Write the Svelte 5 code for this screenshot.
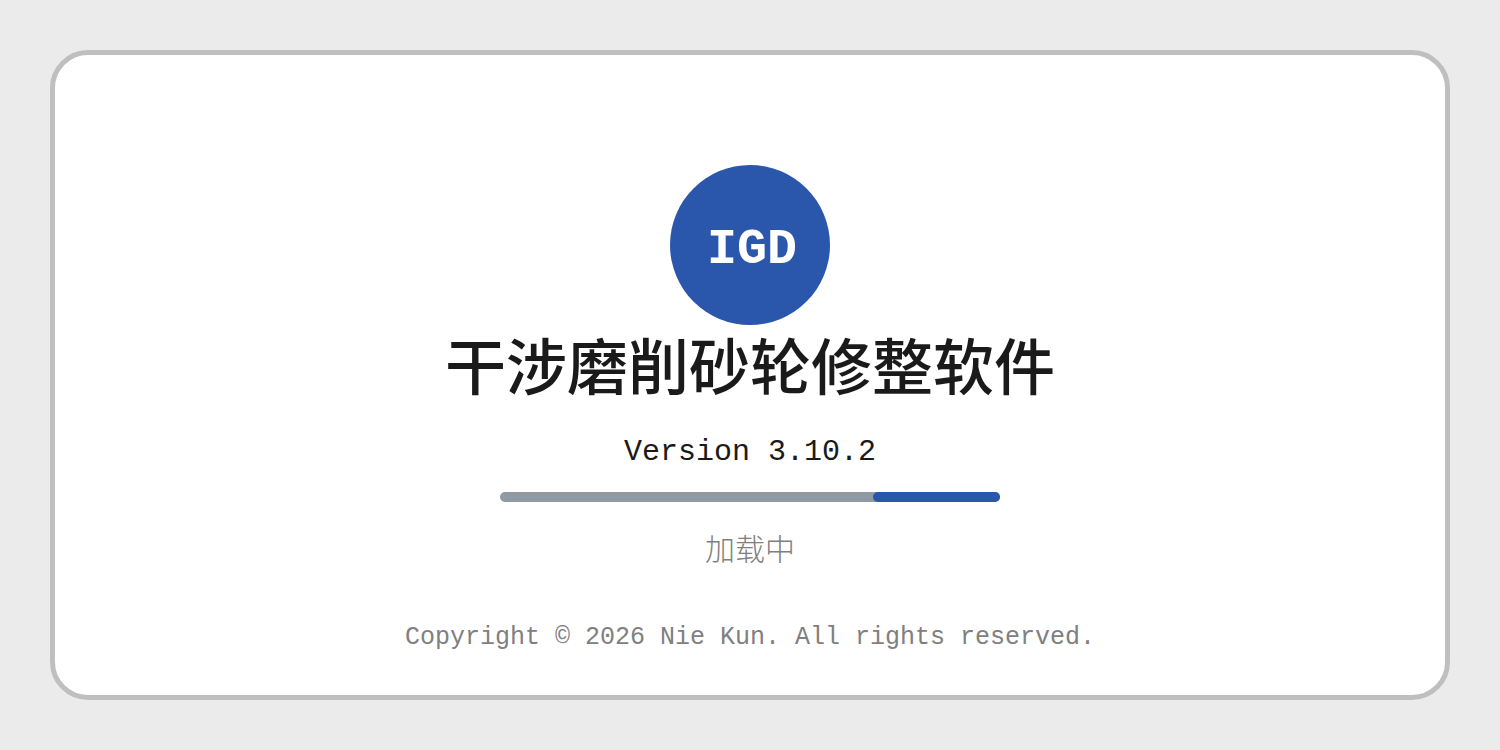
<script>
    let version = '3.10.2';
    let status = '加载中';
    // indeterminate bar: where the chunk starts and how long it is, in percent
    let chunk = { start: 74.6, size: 25.4 };
</script>

<main>
    <section class="splash">
        <div class="logo">IGD</div>
        <h1>干涉磨削砂轮修整软件</h1>
        <p class="version">Version {version}</p>
        <div class="bar" role="progressbar" aria-label={status}>
            <div class="chunk" style="margin-left: {chunk.start}%; width: {chunk.size}%"></div>
        </div>
        <p class="status">{status}</p>
        <p class="copyright">Copyright © 2026 Nie Kun. All rights reserved.</p>
    </section>
</main>

<style>
    :global(body) {
        margin: 0;
        background: #ebebeb;
    }

    main {
        box-sizing: border-box;
        min-height: 100vh;
        padding: 50px;
        display: flex;
        font-family: SimSun, "Liberation Mono", "Noto Sans CJK SC", monospace;
    }

    .splash {
        flex: 1;
        display: flex;
        flex-direction: column;
        align-items: center;
        padding: 110px 40px 20px;
        border: 5px solid #bfbfbf;
        border-radius: 38px;
        background: #fff;
    }

    .logo {
        box-sizing: border-box;
        display: flex;
        align-items: center;
        justify-content: center;
        width: 160px;
        height: 160px;
        padding: 8px 0 0 4px;
        border-radius: 50%;
        background: #2a57ab;
        color: #fff;
        font-size: 50px;
        font-weight: 700;
    }

    h1 {
        margin: 4px 0 0;
        color: #1a1a1a;
        font-size: 61px;
        line-height: 90px;
        font-weight: 500;
    }

    p {
        margin: 0;
        line-height: 40px;
    }

    .version {
        margin-top: 13px;
        color: #1a1a1a;
        font-size: 30px;
    }

    .bar {
        width: 500px;
        max-width: 100%;
        margin-top: 20px;
        border-radius: 5px;
        background: #909aa2;
    }

    .chunk {
        height: 10px;
        border-radius: 5px;
        background: #2a57ab;
    }

    .status {
        margin-top: 30px;
        color: #808080;
        font-size: 30px;
        font-weight: 300;
    }

    .copyright {
        margin-top: 46px;
        color: #808080;
        font-size: 25px;
    }
</style>
